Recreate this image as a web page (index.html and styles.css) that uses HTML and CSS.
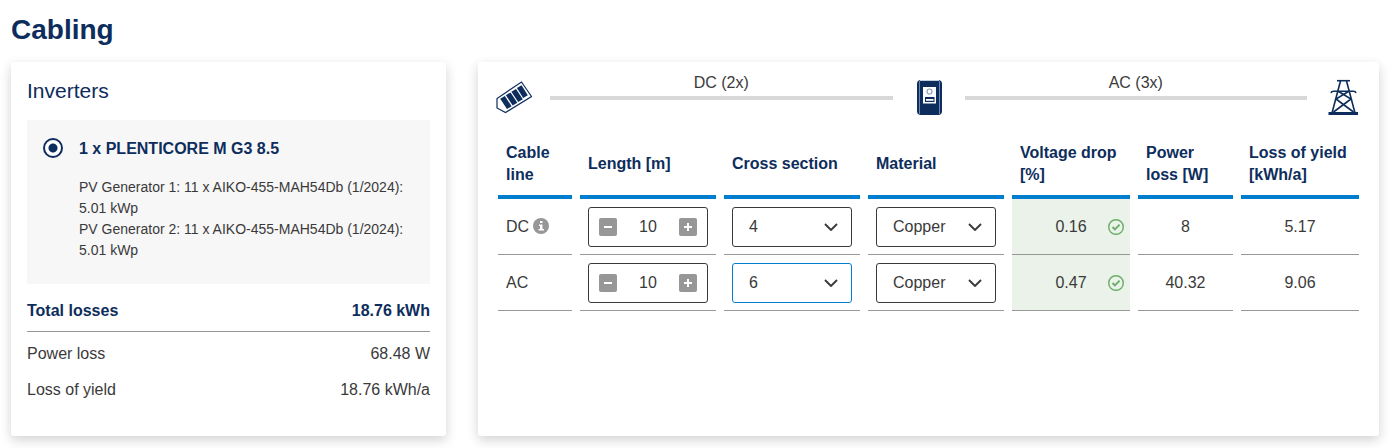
FILE: index.html
```html
<!DOCTYPE html>
<html lang="en">
<head>
<meta charset="utf-8">
<title>Cabling</title>
<link rel="stylesheet" href="styles.css">
</head>
<body>
<svg class="sprite" aria-hidden="true">
  <symbol id="chevron" viewBox="0 0 14 8"><path d="M1 1l6 6 6-6" fill="none" stroke="currentColor" stroke-width="1.9"/></symbol>
  <symbol id="check" viewBox="0 0 16 16"><circle cx="8" cy="8" r="7.3" fill="none" stroke="currentColor" stroke-width="1.4"/><path d="M4.500 8l2.400 2.400 4.700-4.700" fill="none" stroke="currentColor" stroke-width="1.900"/></symbol>
  <symbol id="minus" viewBox="0 0 18 18"><path d="M5 9h8" stroke="currentColor" stroke-width="2"/></symbol>
  <symbol id="plus" viewBox="0 0 18 18"><path d="M5 9h8M9 5v8" stroke="currentColor" stroke-width="2"/></symbol>
</svg>
<main class="page">
  <h1 class="title">Cabling</h1>
  <div class="columns">
    <section class="card summary">
      <h2 class="subtitle">Inverters</h2>
      <div class="inverter">
        <input class="radio" type="radio" name="inverter" id="inv1" checked>
        <div class="inverter-body">
          <label class="inverter-name" for="inv1">1 x PLENTICORE M G3 8.5</label>
          <p class="generators">PV Generator 1: 11 x AIKO-455-MAH54Db (1/2024): 5.01 kWp<br>PV Generator 2: 11 x AIKO-455-MAH54Db (1/2024): 5.01 kWp</p>
        </div>
      </div>
      <dl class="totals">
        <div class="total-row total-main"><dt>Total losses</dt><dd>18.76 kWh</dd></div>
        <div class="total-row"><dt>Power loss</dt><dd>68.48 W</dd></div>
        <div class="total-row"><dt>Loss of yield</dt><dd>18.76 kWh/a</dd></div>
      </dl>
    </section>

    <section class="card details">
      <div class="flow">
        <svg class="flow-icon" viewBox="0 0 36 38" role="img" aria-label="PV generator">
          <path d="M25.500 3L35.500 17.500 9.500 33.500 1 29V19.500z" fill="none" stroke="#0d2d5c" stroke-width="1.200"/>
          <g fill="#0d2d5c"><path d="M4.200 19.800l4.600-2.800 6.800 10.300-4.600 2.800z"/><path d="M9.900 16.200l4.600-2.800 6.800 10.300-4.600 2.800z"/><path d="M15.400 12.700l4.600-2.800 6.800 10.300-4.600 2.800z"/><path d="M20.900 9.100l4.600-2.800 6.300 9.900-4.600 2.800z"/></g>
        </svg>
        <div class="flow-line">DC (2x)</div>
        <svg class="flow-icon" viewBox="0 0 36 38" role="img" aria-label="Inverter">
          <rect x="6" y="1" width="25" height="35" rx="4" fill="#0d2d5c"/>
          <path d="M8.500 2v33M28.500 2v33" stroke="#6c87ac" stroke-width="1"/>
          <path d="M9 1.500h19" stroke="#c5d0de" stroke-width="1"/>
          <rect x="12" y="8" width="13" height="16.500" fill="#fff"/>
          <circle cx="18.500" cy="12.500" r="2.500" fill="none" stroke="#8fa0bb" stroke-width="1.200"/>
          <path d="M14 18h9.500v5H14z" fill="#0d2d5c"/><path d="M15 20h7.500v1.800h-7.500z" fill="#fff"/>
        </svg>
        <div class="flow-line">AC (3x)</div>
        <svg class="flow-icon" viewBox="0 0 36 38" role="img" aria-label="Grid">
          <g fill="none" stroke="#0d2d5c" stroke-width="1.600">
            <path d="M12 1.700h13"/>
            <path d="M15.500 2L7 34M21.500 2L30 34"/>
            <path d="M6 14q.5-1.700 2.500-1.700h20q2 0 2.500 1.700"/>
            <path d="M13.200 12.300L26 20 8.500 33M23.800 12.300L11 20l17.500 13"/>
          </g>
          <path d="M3.500 33h29.500v3h-29.500z" fill="#0d2d5c"/>
        </svg>
      </div>

      <table class="cables">
        <colgroup><col class="c-line"><col class="c-field"><col class="c-field"><col class="c-field"><col class="c-drop"><col class="c-power"><col class="c-yield"></colgroup>
        <thead>
          <tr><th>Cable line</th><th>Length [m]</th><th>Cross section</th><th>Material</th><th>Voltage drop [%]</th><th>Power loss [W]</th><th>Loss of yield [kWh/a]</th></tr>
        </thead>
        <tbody>
          <tr>
            <td><span class="line-name">DC <svg class="info" viewBox="0 0 16 16" role="img" aria-label="Information"><circle cx="8" cy="8" r="8" fill="#979797"/><path d="M7 3h2.500v2H7zM6 6.500h3.500V11H11v1.500H5.500V11H7V8H6z" fill="#fff"/></svg></span></td>
            <td><div class="stepper"><button class="step" type="button" aria-label="Decrease DC length"><svg><use href="#minus"/></svg></button><input class="number" type="text" value="10" aria-label="DC length"><button class="step" type="button" aria-label="Increase DC length"><svg><use href="#plus"/></svg></button></div></td>
            <td><div class="select-wrap"><select class="select" aria-label="DC cross section"><option>4</option><option>6</option></select><svg class="chevron"><use href="#chevron"/></svg></div></td>
            <td><div class="select-wrap"><select class="select" aria-label="DC material"><option>Copper</option></select><svg class="chevron"><use href="#chevron"/></svg></div></td>
            <td class="ok"><div class="drop"><span class="drop-value">0.16</span><svg class="check"><use href="#check"/></svg></div></td>
            <td class="value">8</td>
            <td class="value">5.17</td>
          </tr>
          <tr>
            <td><span class="line-name">AC</span></td>
            <td><div class="stepper"><button class="step" type="button" aria-label="Decrease AC length"><svg><use href="#minus"/></svg></button><input class="number" type="text" value="10" aria-label="AC length"><button class="step" type="button" aria-label="Increase AC length"><svg><use href="#plus"/></svg></button></div></td>
            <td><div class="select-wrap"><select class="select active" aria-label="AC cross section"><option>6</option><option>4</option></select><svg class="chevron"><use href="#chevron"/></svg></div></td>
            <td><div class="select-wrap"><select class="select" aria-label="AC material"><option>Copper</option></select><svg class="chevron"><use href="#chevron"/></svg></div></td>
            <td class="ok"><div class="drop"><span class="drop-value">0.47</span><svg class="check"><use href="#check"/></svg></div></td>
            <td class="value">40.32</td>
            <td class="value">9.06</td>
          </tr>
        </tbody>
      </table>
    </section>
  </div>
</main>
</body>
</html>
```

FILE: styles.css
```css
:root {
  --navy: #0d2d5c;
  --blue: #007dcd;
  --text: #3a3a3a;
  --grey: #979797;
}
* { box-sizing: border-box; }
body {
  margin: 0;
  background: #fff;
  color: var(--text);
  font: 16px/22px "Liberation Sans", Arial, sans-serif;
}
.sprite { position: absolute; width: 0; height: 0; }
.page { padding: 14px 21px 12px 11px; }
h1, h2, p, dl, dd { margin: 0; }
.title {
  margin-bottom: 16px;
  color: var(--navy);
  font-size: 28px;
  line-height: 32px;
}
.columns {
  display: grid;
  grid-template-columns: 435fr 901fr;
  gap: 32px;
}
.card {
  min-width: 0;
  background: #fff;
  border-radius: 3px;
  box-shadow: 0 4px 12px rgba(0, 0, 0, 0.18);
}

/* Summary card */
.summary { padding: 16px 16px 28px; }
.subtitle {
  margin-bottom: 16px;
  color: var(--navy);
  font-size: 21px;
  font-weight: 400;
  line-height: 26px;
}
.inverter {
  display: flex;
  gap: 16px;
  padding: 16px 16px 23px;
  background: #f7f7f7;
}
.radio {
  appearance: none;
  flex: none;
  width: 20px;
  height: 20px;
  margin: 2px 0 0;
  border: 2px solid var(--navy);
  border-radius: 50%;
  background: radial-gradient(circle, var(--navy) 4px, #fff 5px);
}
.inverter-name {
  display: block;
  margin-bottom: 15px;
  color: var(--navy);
  font-weight: 700;
  line-height: 26px;
}
.generators { font-size: 14px; line-height: 21px; }
.total-row {
  display: flex;
  justify-content: space-between;
  padding: 7px 0;
}
.total-main {
  margin-bottom: 4px;
  padding: 16px 0 9px;
  border-bottom: 1px solid var(--grey);
  color: var(--navy);
  font-weight: 700;
}

/* Flow diagram */
.details { padding-top: 8px; }
.flow {
  display: flex;
  align-items: flex-end;
  gap: 18px;
  margin: 0 18px;
}
.flow-icon { flex: none; width: 36px; height: 38px; }
.flow-line {
  flex: 1;
  margin-bottom: 17px;
  padding: 2px 0;
  border-bottom: 4px solid #d8d8d8;
  text-align: center;
}

/* Cable table */
.cables {
  width: calc(100% - 24px);
  margin: 16px 12px 0;
  border-spacing: 8px 0;
  table-layout: fixed;
}
.c-line { width: 74px; }
.c-field { width: 136px; }
.c-power { width: 95px; }
.cables th {
  padding: 9px 8px;
  border-bottom: 4px solid var(--blue);
  color: var(--navy);
  text-align: left;
  vertical-align: middle;
}
.cables td {
  height: 56px;
  padding: 8px 8px 7px;
  border-bottom: 1px solid var(--grey);
}
.line-name { display: flex; align-items: center; gap: 4px; }
.info { width: 16px; height: 16px; margin-bottom: 3px; }
.stepper {
  display: flex;
  align-items: center;
  justify-content: space-between;
  height: 40px;
  padding: 0 10px;
  border: 1px solid var(--text);
  border-radius: 3px;
}
.step {
  flex: none;
  width: 18px;
  height: 18px;
  padding: 0;
  border: 0;
  border-radius: 2px;
  background: var(--grey);
  color: #fff;
}
.step svg { display: block; width: 18px; height: 18px; }
.number {
  flex: 1;
  min-width: 0;
  padding: 0;
  border: 0;
  background: none;
  color: inherit;
  font: inherit;
  text-align: center;
}
.select-wrap { position: relative; }
.select {
  appearance: none;
  display: block;
  width: 100%;
  height: 40px;
  padding: 0 32px 0 16px;
  border: 1px solid var(--text);
  border-radius: 3px;
  background: #fff;
  color: inherit;
  font: inherit;
}
.select.active { border-color: var(--blue); }
.chevron {
  position: absolute;
  top: 16px;
  right: 14px;
  width: 14px;
  height: 8px;
  pointer-events: none;
}
.cables .ok { padding: 8px 6px 7px; background: #eaf2e9; }
.drop {
  display: grid;
  grid-template-columns: 1fr auto 1fr;
  align-items: center;
}
.drop-value { grid-column: 2; }
.check {
  width: 16px;
  height: 16px;
  justify-self: end;
  color: #6aad67;
}
.cables .value { text-align: center; }
```
